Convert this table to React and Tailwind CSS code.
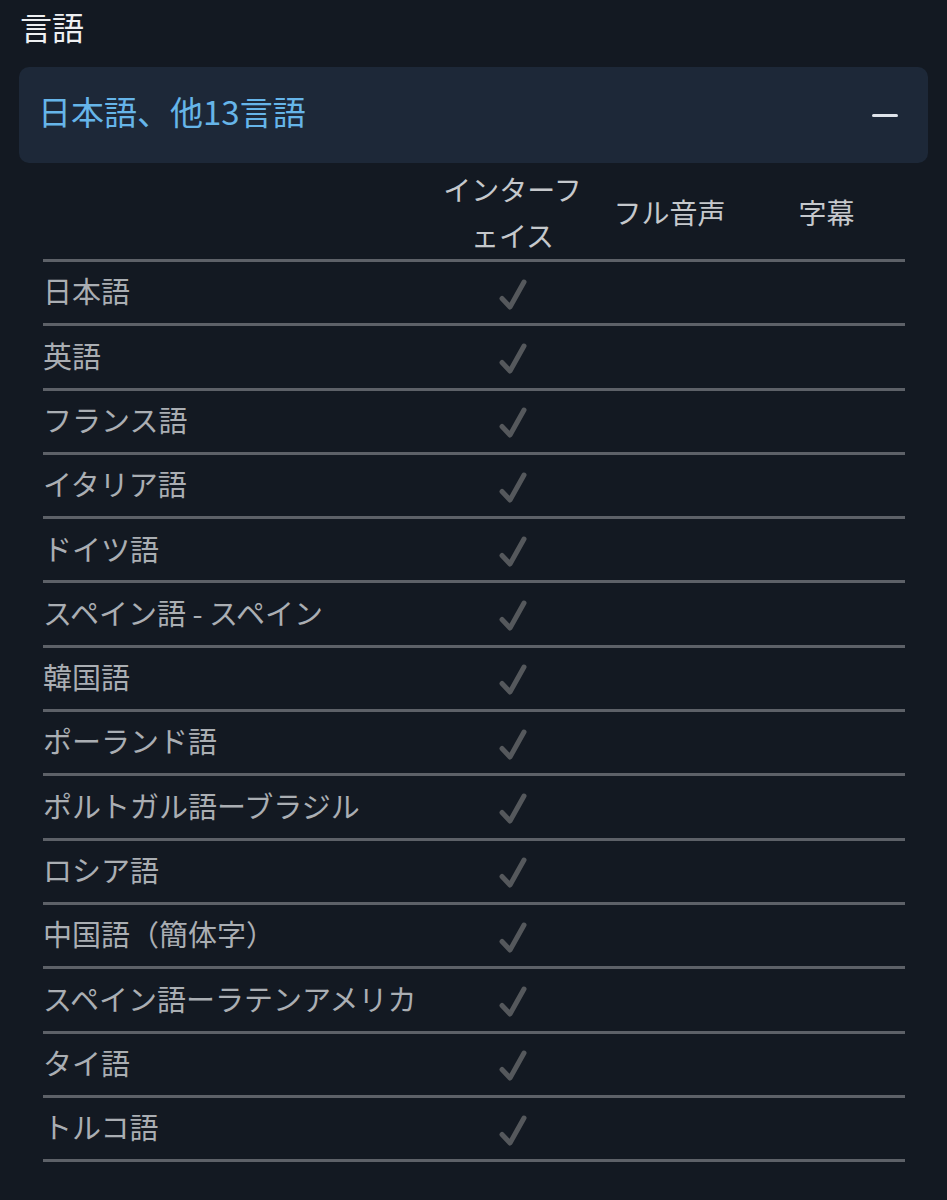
import { useState } from 'react';

const languages = [
  '日本語',
  '英語',
  'フランス語',
  'イタリア語',
  'ドイツ語',
  'スペイン語 - スペイン',
  '韓国語',
  'ポーランド語',
  'ポルトガル語ーブラジル',
  'ロシア語',
  '中国語（簡体字）',
  'スペイン語ーラテンアメリカ',
  'タイ語',
  'トルコ語',
];

const CheckMark = () => (
  <svg width="32" height="34" viewBox="0 0 32 34" fill="none">
    <path
      d="M5 21.5 L13 30 L27 5"
      stroke="#55585c"
      strokeWidth="5"
      strokeLinecap="round"
      strokeLinejoin="round"
    />
  </svg>
);

const App = () => {
  const [open, setOpen] = useState(true);

  return (
    <div
      className="min-h-[1200px] w-full bg-[#131922] px-[19px] pt-[6px]"
      style={{ fontFamily: '"Noto Sans CJK JP", "Noto Sans", sans-serif' }}
    >
      <h2 className="text-[32px] leading-[40px] text-[#eef0f2] pl-[1px]">言語</h2>

      <button
        onClick={() => setOpen(!open)}
        className="mt-[21px] flex h-[96px] w-full items-center justify-between rounded-[10px] bg-[#1d2838] pl-[19px] pr-[30px]"
      >
        <span className="pb-[7px] text-[33px] text-[#66b5e9]">日本語、他13言語</span>
        <span className="block h-[3px] w-[26px] rounded-sm bg-[#dfe4ea]" />
      </button>

      {open && (
        <div className="mx-[24px] mr-[23px]">
          <div className="grid grid-cols-[1fr_157px_157px_157px] items-center border-b-[3px] border-[#5d6168] pt-[2px] text-[28px] leading-[46px] text-[#c5c8cc] h-[99px]">
            <div />
            <div className="text-center">
              インターフ
              <br />
              ェイス
            </div>
            <div className="text-center">フル音声</div>
            <div className="text-center">字幕</div>
          </div>

          {languages.map((lang) => (
            <div
              key={lang}
              className="grid h-[64.3px] grid-cols-[1fr_157px_157px_157px] items-center border-b-[3px] border-[#5d6168] text-[29px] text-[#aaaeb3]"
            >
              <div className="pb-[3px]">{lang}</div>
              <div className="flex justify-center pt-[2px]">
                <CheckMark />
              </div>
              <div />
              <div />
            </div>
          ))}
        </div>
      )}
    </div>
  );
};

export default App;
